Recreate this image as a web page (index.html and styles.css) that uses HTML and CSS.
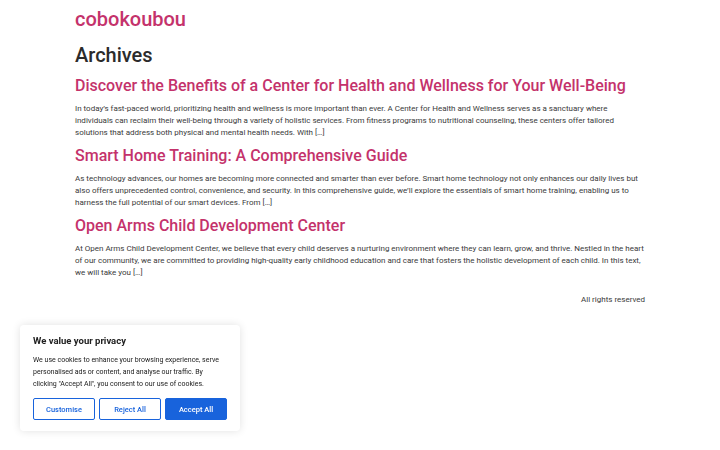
FILE: index.html
```html
<!DOCTYPE html>
<html>
<head>
<meta charset="utf-8">
<link rel="stylesheet" href="styles.css">
</head>
<body>
<div class="page">
  <header class="site-header">
    <a class="site-title" href="#">cobokoubou</a>
  </header>
  <main class="content">
    <h1 class="archive-title">Archives</h1>
    <article class="post">
      <h2 class="post-title"><a href="#">Discover the Benefits of a Center for Health and Wellness for Your Well-Being</a></h2>
      <p class="excerpt">In today’s fast-paced world, prioritizing health and wellness is more important than ever. A Center for Health and Wellness serves as a sanctuary where individuals can reclaim their well-being through a variety of holistic services. From fitness programs to nutritional counseling, these centers offer tailored solutions that address both physical and mental health needs. With […]</p>
    </article>
    <article class="post">
      <h2 class="post-title"><a href="#">Smart Home Training: A Comprehensive Guide</a></h2>
      <p class="excerpt">As technology advances, our homes are becoming more connected and smarter than ever before. Smart home technology not only enhances our daily lives but also offers unprecedented control, convenience, and security. In this comprehensive guide, we’ll explore the essentials of smart home training, enabling us to harness the full potential of our smart devices. From […]</p>
    </article>
    <article class="post">
      <h2 class="post-title"><a href="#">Open Arms Child Development Center</a></h2>
      <p class="excerpt">At Open Arms Child Development Center, we believe that every child deserves a nurturing environment where they can learn, grow, and thrive. Nestled in the heart of our community, we are committed to providing high-quality early childhood education and care that fosters the holistic development of each child. In this text, we will take you […]</p>
    </article>
  </main>
  <footer class="site-footer">All rights reserved</footer>
</div>
<div class="cookie">
  <p class="cookie-title">We value your privacy</p>
  <p class="cookie-text">We use cookies to enhance your browsing experience, serve personalised ads or content, and analyse our traffic. By clicking "Accept All", you consent to our use of cookies.</p>
  <div class="cookie-buttons">
    <button class="btn btn-outline">Customise</button>
    <button class="btn btn-outline">Reject All</button>
    <button class="btn btn-fill">Accept All</button>
  </div>
</div>
</body>
</html>
```
FILE: styles.css
```css
html, body {
  margin: 0;
  padding: 0;
  background: #fff;
}
body {
  font-family: Roboto, "Liberation Sans", sans-serif;
  color: #333;
}
.page {
  width: 570px;
  margin: 0 auto;
  padding-top: 6px;
}
.site-title {
  display: block;
  font-size: 20px;
  font-weight: 500;
  color: #c4326b;
  text-decoration: none;
  line-height: 26px;
}
.archive-title {
  margin: 10px 0 0;
  font-size: 20px;
  font-weight: 500;
  color: #2b2b2b;
  line-height: 26px;
}
.post-title {
  margin: 6px 0 0;
  font-size: 16px;
  font-weight: 500;
  line-height: 22px;
}
.archive-title + .post .post-title {
  margin-top: 7px;
}
.post-title a {
  color: #c4326b;
  text-decoration: none;
}
.excerpt {
  margin: 6px 0 0;
  font-size: 8px;
  line-height: 12px;
  color: #3a3a3a;
}
.site-footer {
  margin-top: 15px;
  text-align: right;
  font-size: 8px;
  line-height: 12px;
  color: #3a3a3a;
}
.cookie {
  position: fixed;
  left: 20px;
  top: 325px;
  width: 220px;
  box-sizing: border-box;
  padding: 9px 13px 11px;
  background: #fff;
  border-radius: 4px;
  box-shadow: 0 0 8px rgba(0,0,0,0.12);
}
.cookie-title {
  margin: 0;
  font-size: 9.5px;
  font-weight: 700;
  color: #212121;
  line-height: 14px;
}
.cookie-text {
  margin: 6px 0 0;
  font-size: 7px;
  line-height: 12px;
  color: #212121;
}
.cookie-buttons {
  display: flex;
  gap: 4px;
  margin-top: 8px;
}
.btn {
  flex: 1;
  height: 22px;
  box-sizing: border-box;
  font-family: Roboto, "Liberation Sans", sans-serif;
  font-size: 7.5px;
  font-weight: 500;
  border-radius: 2px;
  border: 1.5px solid #1863dc;
  padding: 0;
}
.btn-outline {
  background: #fff;
  color: #1863dc;
}
.btn-fill {
  background: #1863dc;
  color: #fff;
}
```
